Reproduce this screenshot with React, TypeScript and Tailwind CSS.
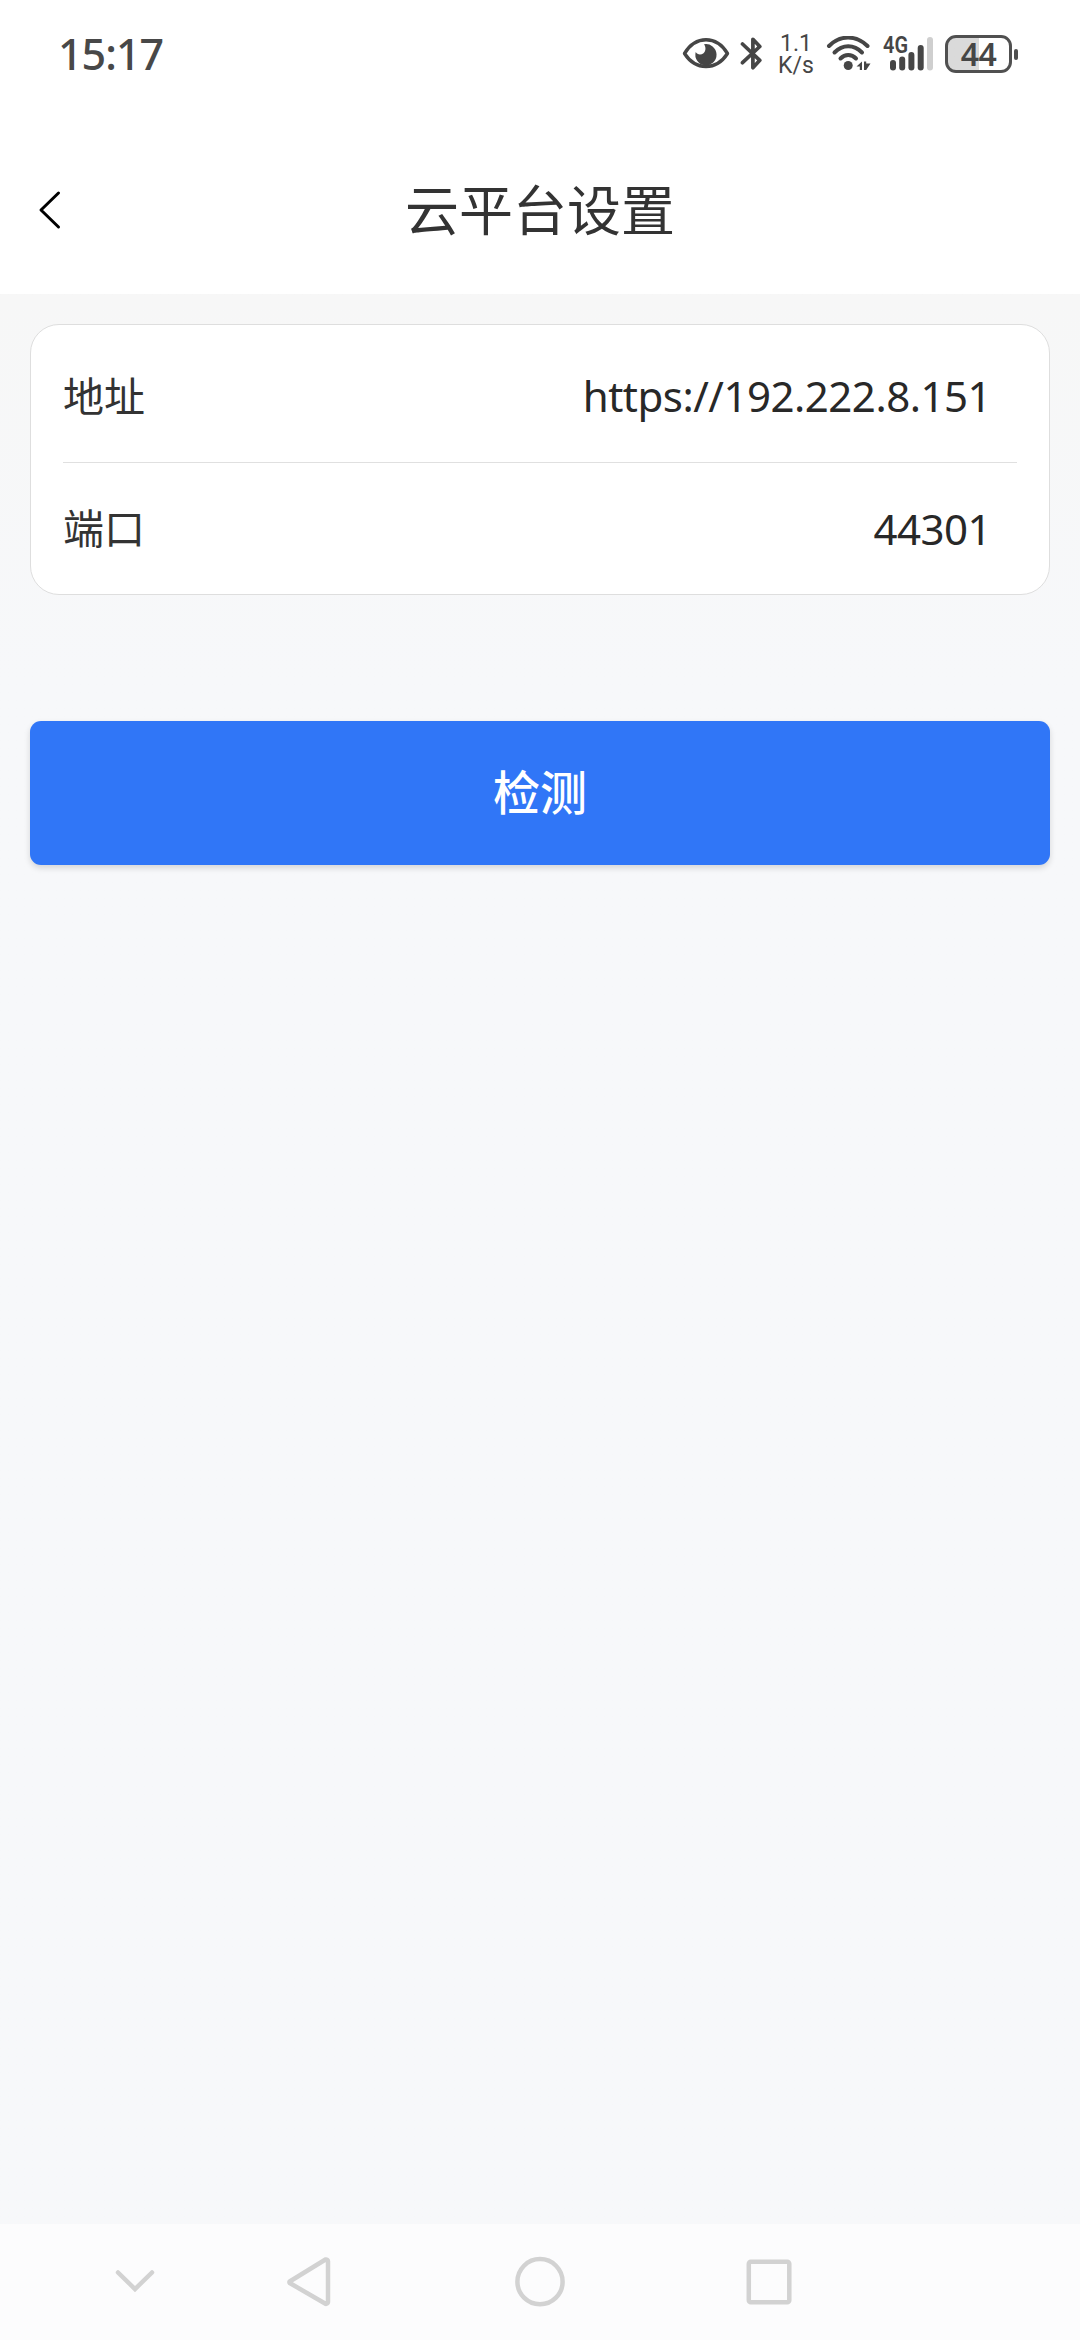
const settings = [
  { label: "地址", value: "https://192.222.8.151" },
  { label: "端口", value: "44301" },
];

const EyeIcon = () => (
  <svg className="w-[48px] h-[36px]" viewBox="0 0 48 36" fill="none">
    <path
      d="M2.5 17.500C8 8.500 15.500 3.800 24 3.800s16 4.700 21.500 13.700C40 26 32.500 30.500 24 30.500S8 26 2.500 17.500z"
      stroke="#464646"
      strokeWidth="3.400"
      strokeLinejoin="round"
    />
    <path
      d="M22 8.300A10.600 10.600 0 1 1 13.700 16c1.300 2.500 5 3.500 7.800 1.200 2.600-2.200 2.500-6.300.5-8.900z"
      fill="#464646"
    />
  </svg>
);

const BluetoothIcon = () => (
  <svg className="w-[24px] h-[36px]" viewBox="0 0 24 36" fill="none">
    <path
      d="M2.500 8L19.800 24.300L12.900 31.700V3.300L19.800 10.500L2.500 26.700"
      stroke="#464646"
      strokeWidth="3.700"
      strokeLinecap="round"
      strokeLinejoin="round"
    />
  </svg>
);

const WifiIcon = () => (
  <svg className="w-[46px] h-[36px]" viewBox="0 0 46 36" fill="none">
    <g stroke="#464646" strokeWidth="4" strokeLinecap="round">
      <path d="M3 10C14-1.200 30-1.200 41.500 10" />
      <path d="M8.500 16.500C16.500 8.200 28 8.200 36 16.500" />
      <path d="M14.500 22.500C19 17.800 25.500 17.800 30 22.500" />
    </g>
    <circle cx="22.200" cy="29.500" r="4.500" fill="#464646" />
    <path d="M30.500 30.500L36 25.500V34h-2.200v-3.500zM38 25.500h2.200v2L44.500 27.500 40.200 34H38z" fill="#464646" />
  </svg>
);

const SignalIcon = () => (
  <svg className="w-[54px] h-[36px] overflow-visible" viewBox="0 0 54 36">
    <text
      x="2"
      y="17"
      fontFamily="Roboto, sans-serif"
      fontSize="23"
      fontWeight="600"
      fill="#464646"
      textLength="25"
      lengthAdjust="spacingAndGlyphs"
    >
      4G
    </text>
    <g fill="#464646">
      <rect x="9" y="24" width="6" height="10.500" rx="3" />
      <rect x="18.200" y="20.500" width="6" height="14" rx="3" />
      <rect x="27.400" y="16" width="6" height="18.500" rx="3" />
      <rect x="36.700" y="9" width="6" height="25.500" rx="3" />
    </g>
    <rect x="46" y="1" width="6" height="33.500" rx="3" fill="#cfcfcf" />
  </svg>
);

const Battery = () => (
  <div className="flex items-center">
    <div className="w-[67px] h-[38px] rounded-[11px] border-3 border-[#505050] bg-linear-to-r from-[#dadada] from-50% to-white to-50% flex items-center justify-center">
      <span className="text-[32px] leading-none font-semibold tracking-[-0.5px] text-[#464646]">44</span>
    </div>
    <div className="ml-[2px] w-[4px] h-[11px] rounded-full bg-[#505050]" />
  </div>
);

const StatusBar = () => (
  <div className="h-[108px] pl-[58px] pr-[62px] flex items-center justify-between">
    <span className="pb-[2px] text-[43px] leading-none font-medium tracking-[-1px] text-[#484848]">15:17</span>
    <div className="flex items-center">
      <EyeIcon />
      <div className="ml-[10px]">
        <BluetoothIcon />
      </div>
      <div className="ml-[14px] w-[36px] pt-[2px] text-center font-[Roboto,sans-serif] text-[23px] leading-[22px] text-[#464646]">
        <div>1.1</div>
        <div>K/s</div>
      </div>
      <div className="ml-[12px]">
        <WifiIcon />
      </div>
      <div className="ml-[9px]">
        <SignalIcon />
      </div>
      <div className="ml-[10px]">
        <Battery />
      </div>
    </div>
  </div>
);

const Header = () => (
  <header className="h-[186px] px-[38px] pt-[17px] grid grid-cols-[1fr_auto_1fr] items-center">
    <svg className="w-[24px] h-[40px]" viewBox="0 0 24 40" fill="none">
      <path
        d="M20.500 3L3 20L20.500 37"
        stroke="#000"
        strokeWidth="3"
        strokeLinecap="round"
        strokeLinejoin="round"
      />
    </svg>
    <h1 className="text-[54px] leading-none text-[#333333]">云平台设置</h1>
  </header>
);

const NavigationBar = () => (
  <nav className="h-[116px] pl-[112px] flex items-center bg-[#fcfcfd]">
    <svg className="w-[680px] h-[60px]" viewBox="0 0 680 60" fill="none" stroke="#d2d2d2" strokeWidth="4.500">
      <path d="M6 20.500L23 37L40 20.500" strokeLinecap="round" />
      <path d="M177.700 29.500L213.500 7.500a2 2 0 0 1 2.500 1.800V50a2 2 0 0 1-2.500 1.800L177.700 31a1 1 0 0 1 0-1.500z" strokeLinejoin="round" />
      <circle cx="428" cy="29.700" r="22.600" />
      <rect x="636.800" y="9.700" width="40.500" height="40.500" rx="2" />
    </svg>
  </nav>
);

const App = () => {
  return (
    <div className="h-[2340px] w-[1080px] flex flex-col bg-[#f7f8fa] font-['Noto_Sans','Noto_Sans_CJK_SC',sans-serif]">
      <div className="bg-white">
        <StatusBar />
        <Header />
      </div>

      <main className="flex-1 px-[30px] pt-[30px] bg-linear-to-b from-[#f7f7f7] from-0% to-[#f7f8fa] to-20%">
        <section className="h-[271px] px-[32px] rounded-[29px] border border-[#dedede] bg-white divide-y divide-[#e0e0e0]">
          {settings.map((item) => (
            <div
              key={item.label}
              className="h-[138px] pt-[5px] last:h-[131px] last:pt-0 pr-[26px] flex items-center justify-between"
            >
              <span className="text-[41px] leading-none text-[#333333]">{item.label}</span>
              <span className="text-[42px] leading-none tracking-[-0.5px] text-[#282828]">{item.value}</span>
            </div>
          ))}
        </section>

        <button className="mt-[126px] pb-[2px] w-full h-[144px] rounded-[11px] bg-[#3076f7] text-white text-[47px] leading-none font-medium shadow-[0_3px_6px_rgba(0,0,0,0.14)]">
          检测
        </button>
      </main>

      <NavigationBar />
    </div>
  );
};

export default App;
